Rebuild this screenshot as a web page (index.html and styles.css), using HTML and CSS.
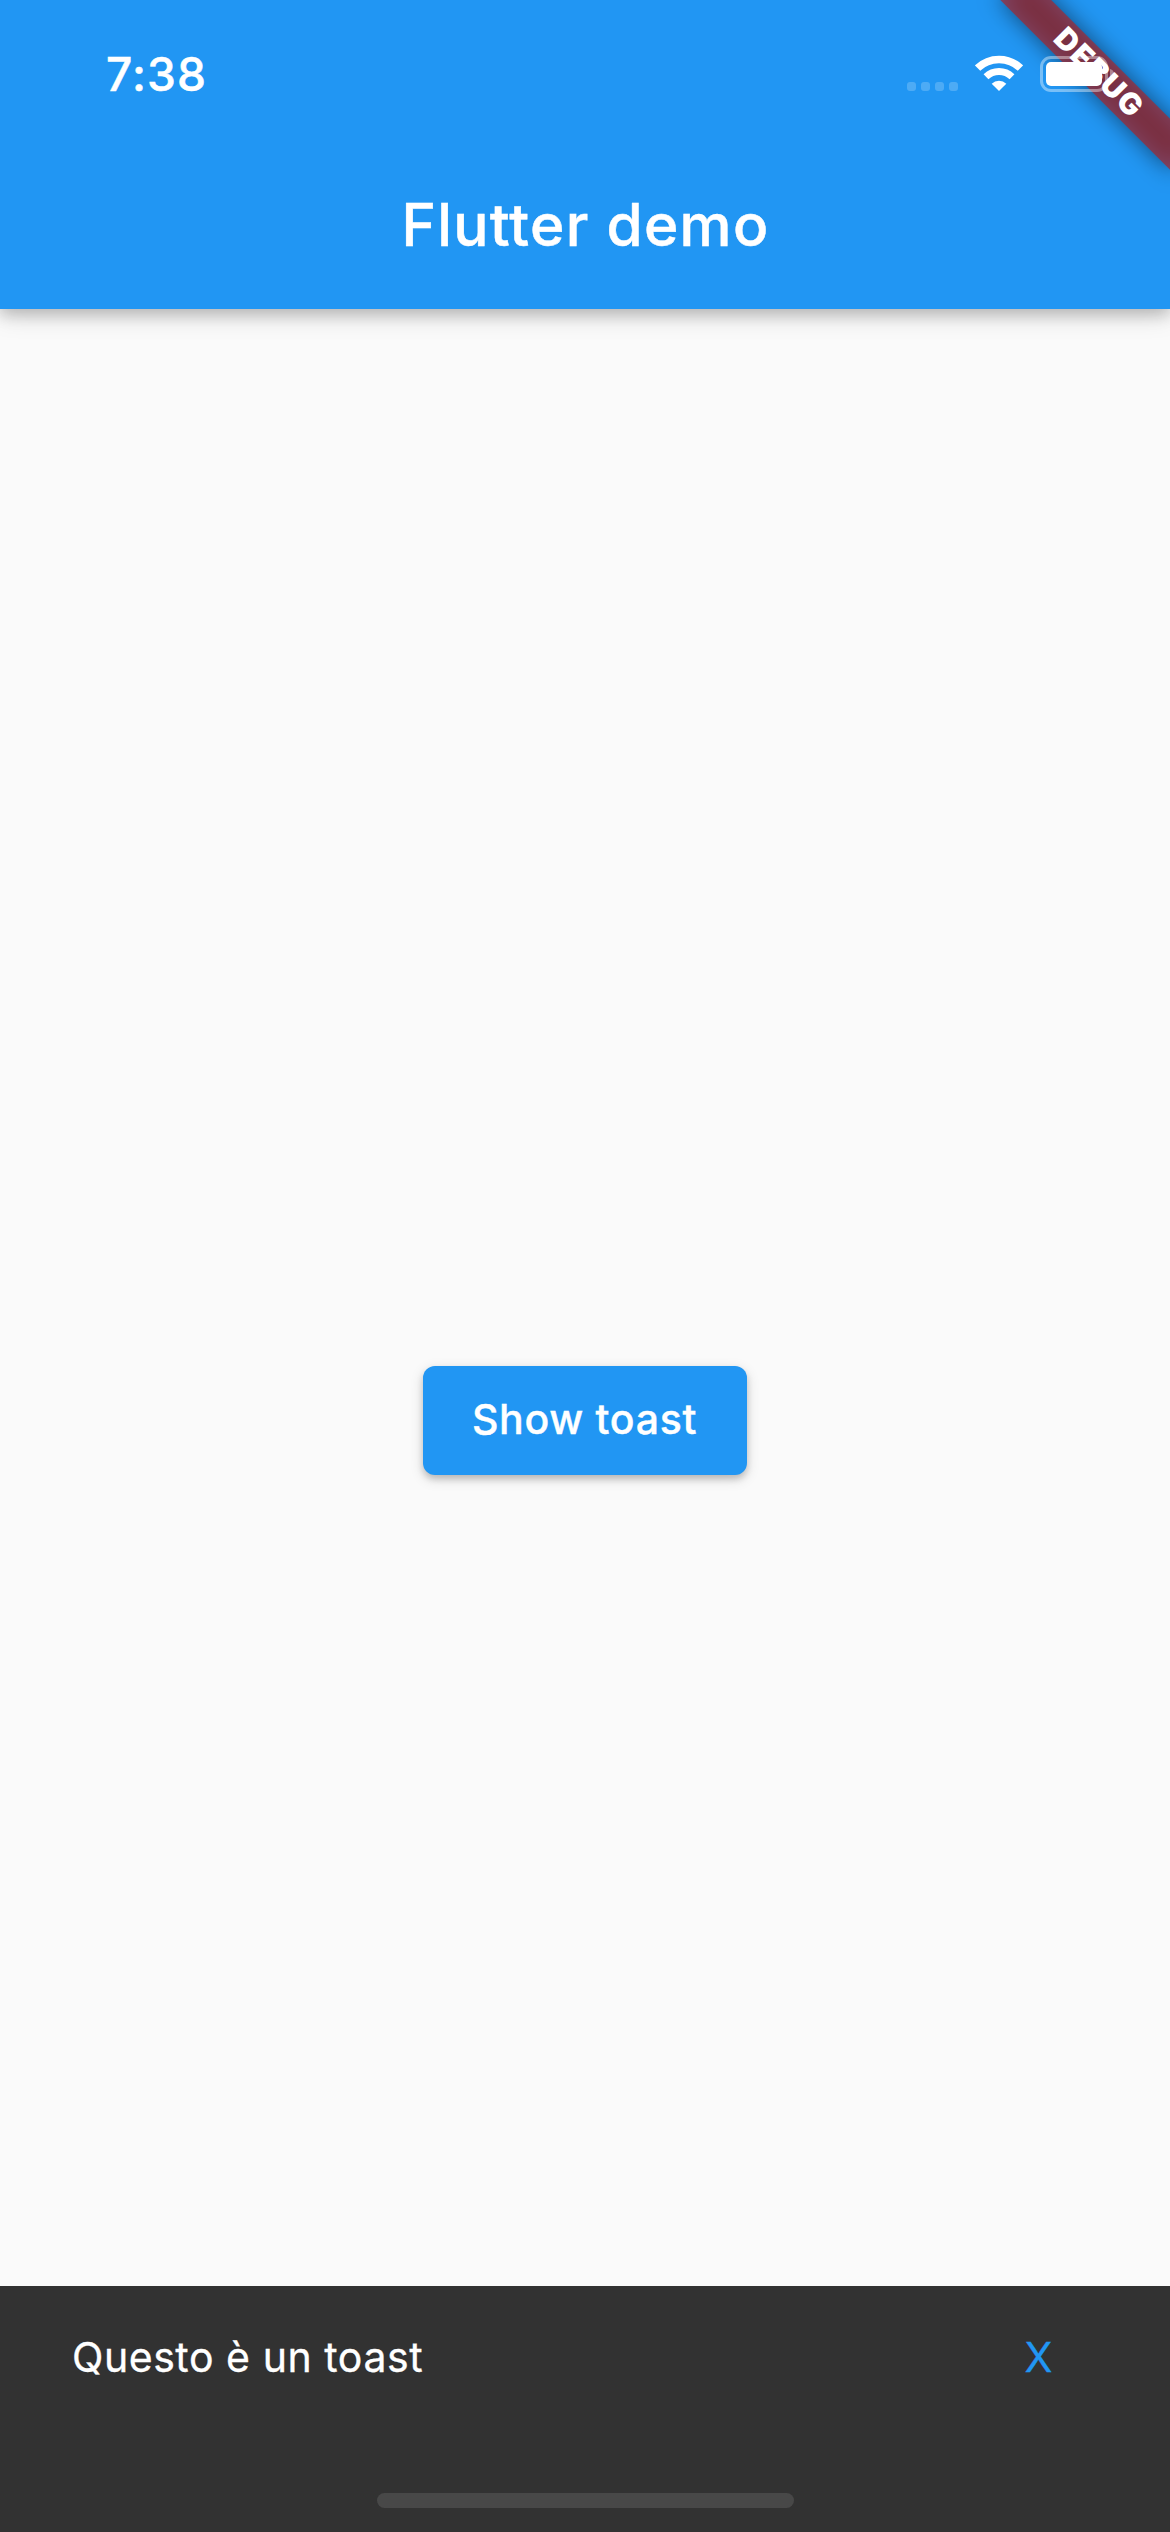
FILE: index.html
```html
<!DOCTYPE html>
<html lang="it">
<head>
<meta charset="utf-8">
<title>Flutter demo</title>
<link rel="stylesheet" href="styles.css">
</head>
<body>
<div class="screen">
  <header class="app-header">
    <div class="status-bar">
      <span class="clock">7:38</span>
      <div class="indicators">
        <div class="signal"><i></i><i></i><i></i><i></i></div>
        <svg class="wifi" viewBox="0 0 48 36" fill="none" stroke="#fff">
          <path d="M2.6 13.1A31 31 0 0 1 45.4 13.1" stroke-width="7.6"/>
          <path d="M11 21.8A18.8 18.8 0 0 1 37 21.8" stroke-width="7"/>
          <path d="M24 36L16.7 28.8A10.4 10.4 0 0 1 31.3 28.8Z" fill="#fff" stroke="none"/>
        </svg>
        <svg class="battery" viewBox="0 0 76 36">
          <rect x="1.5" y="1.5" width="65" height="33" rx="9.5" fill="none" stroke="#fff" stroke-width="3" opacity=".4"/>
          <rect x="6" y="6" width="56" height="24" rx="5" fill="#fff"/>
          <path d="M70 13q4 1 4 5t-4 5z" fill="#fff" opacity=".4"/>
        </svg>
      </div>
    </div>
    <div class="toolbar"><h1 class="title">Flutter demo</h1></div>
  </header>
  <main class="content"><button class="show-button">Show toast</button></main>
  <footer class="toast">
    <div class="toast-row"><span class="message">Questo è un toast</span><a class="dismiss">X</a></div>
    <div class="home-indicator"></div>
  </footer>
  <div class="debug-banner"><span>DEBUG</span></div>
</div>
</body>
</html>
```
FILE: styles.css
```css
* { box-sizing: border-box; }
body { margin: 0; font-family: Inter, "Liberation Sans", sans-serif; font-variant-ligatures: none; }
.screen { position: relative; display: flex; flex-direction: column; width: 1170px; height: 2532px; overflow: hidden; background: #fafafa; }
.app-header { height: 309px; background: #2196f3; color: #fff; box-shadow: 0 6px 14px rgba(0,0,0,.18), 0 4px 26px rgba(0,0,0,.16); }
.status-bar { display: flex; justify-content: space-between; height: 141px; padding: 55px 54px 0 106px; }
.clock { font-size: 46px; line-height: 38px; font-weight: 500; -webkit-text-stroke: .5px currentColor; letter-spacing: 1.2px; }
.indicators { display: flex; height: 37px; position: relative; z-index: 2; }
.signal { display: flex; gap: 5px; align-items: flex-end; height: 36px; margin-right: 17px; }
.signal i { width: 9px; height: 9px; border-radius: 3px; background: rgba(255,255,255,.2); }
.wifi { width: 48px; height: 36px; margin-right: 17px; }
.battery { width: 76px; height: 36px; margin-top: 1px; }
.toolbar { display: flex; align-items: center; justify-content: center; height: 168px; }
.title { margin: 0; padding-left: 1px; font-size: 58.5px; font-weight: 500; -webkit-text-stroke: .5px currentColor; line-height: 70px; letter-spacing: 1.3px; }
.content { display: flex; flex: 1; justify-content: center; padding-top: 1057px; }
.show-button { width: 324px; height: 109px; padding: 0 1px 4px 0; border: 0; border-radius: 12px; background: #2196f3; color: #fff; font: 500 41px/50px Inter, "Liberation Sans", sans-serif; -webkit-text-stroke: .4px currentColor; letter-spacing: .7px; box-shadow: 0 4px 6px rgba(0,0,0,.17), 0 4px 14px rgba(0,0,0,.14); }
.toast { display: flex; flex-direction: column; align-items: center; height: 246px; background: #323232; color: #fff; }
.toast-row { display: flex; justify-content: space-between; width: 100%; padding: 46px 117px 0 72px; font-size: 41px; line-height: 50px; letter-spacing: .55px; -webkit-text-stroke: .3px currentColor; }
.dismiss { color: #2196f3; }
.home-indicator { width: 417px; height: 15px; margin: auto 0 24px; border-radius: 8px; background: #484848; }
.debug-banner { position: absolute; top: 84px; left: 1050px; width: 240px; height: 36px; padding-left: 3px; transform: rotate(45deg); transform-origin: 120px -84px; color: #fff; font-size: 30px; line-height: 34px; font-weight: 900; text-align: center; letter-spacing: 1.7px; }
.debug-banner::before, .debug-banner::after { content: ""; position: absolute; inset: 0; z-index: -1; }
.debug-banner::before { background: rgba(0,0,0,.5); filter: blur(11.9px); }
.debug-banner::after { background: rgba(183,28,28,.63); }
```
